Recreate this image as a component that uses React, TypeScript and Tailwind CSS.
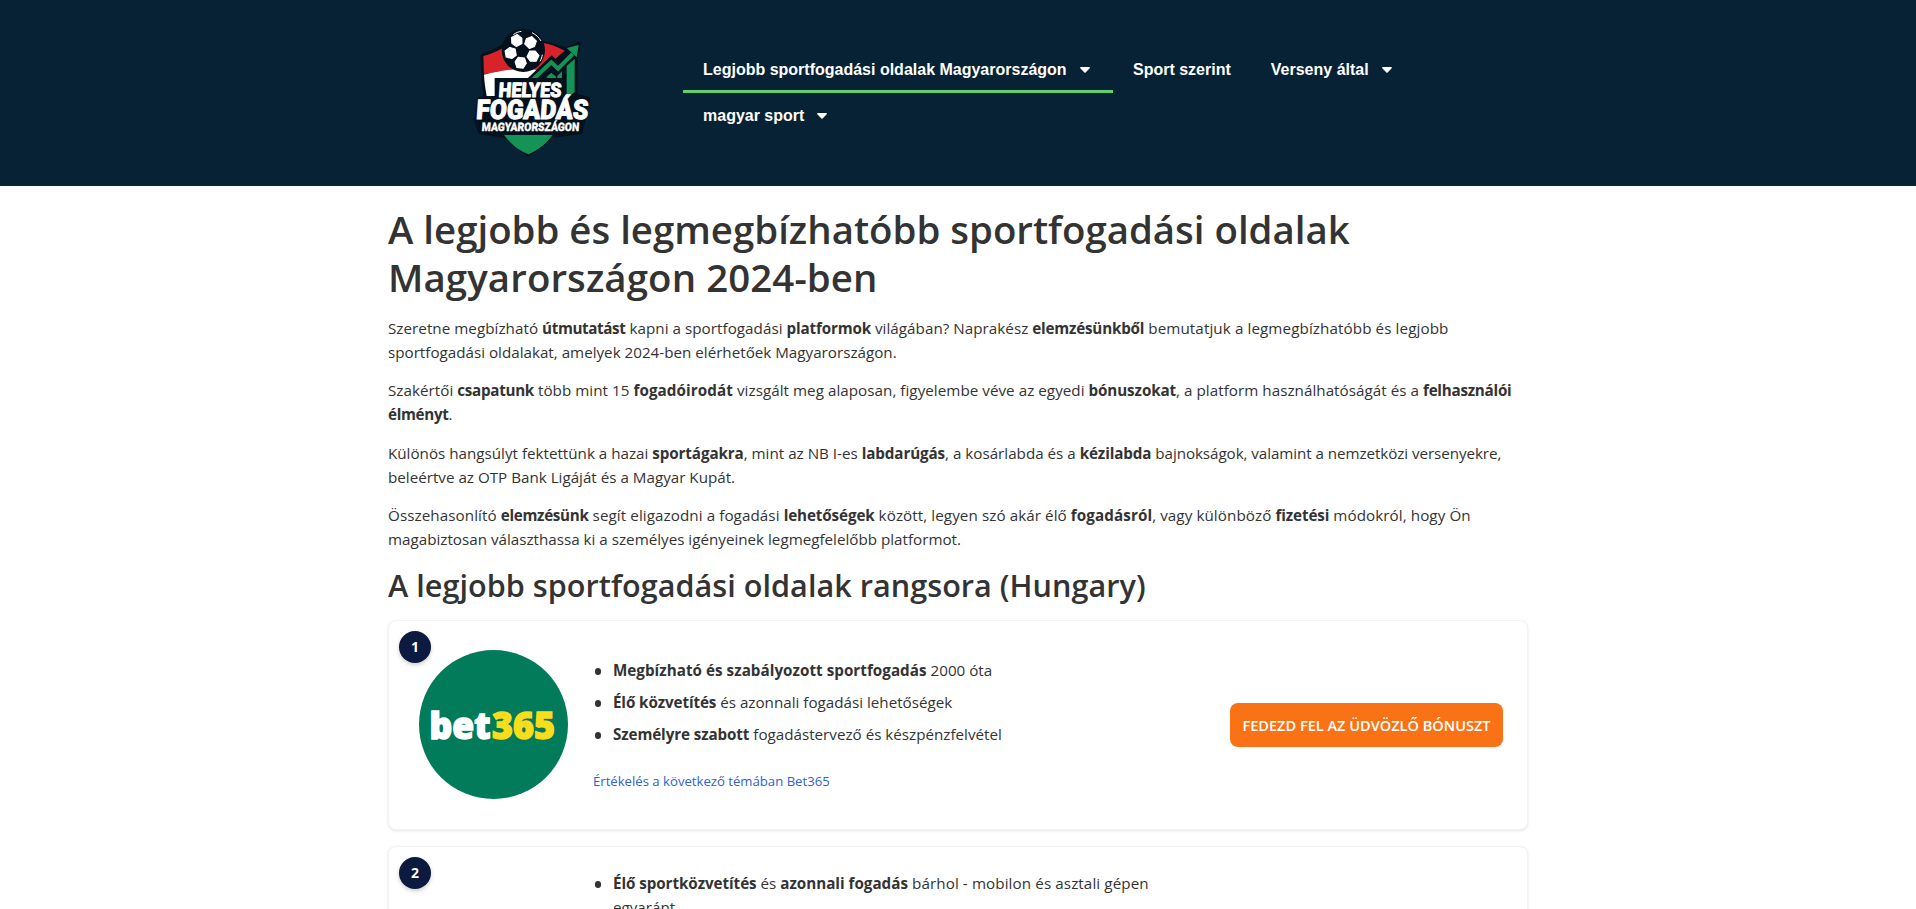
import { ReactNode } from "react";

const PANELS = ["rotate(-28)", "rotate(44)", "rotate(116)", "rotate(188)", "rotate(260)"];

function Logo() {
  return (
    <svg viewBox="0 0 450 450" className="h-[150px] w-[150px]" aria-label="Helyes Fogadás Magyarországon">
      <g stroke="#03111d" strokeWidth="16" strokeLinejoin="round" fill="#03111d">
        <path d="M70 108 C100 98 125 85 145 70 H245 C270 75 295 85 318 90 L355 73 L345 110 V228 L383 238 L360 335 L277 345 L205 402 L132 345 L62 335 L50 300 L60 238 H80 C74 200 70 150 70 108Z" />
      </g>
      <path d="M70 108 C100 99 128 88 150 68 H245 C268 70 292 80 314 92 L276 125 L240 156 C185 140 130 150 72 163Z" fill="#d8232a" />
      <path d="M72 164 C125 150 170 143 232 150 L212 174 H108 V228 H80 C76 205 73 185 72 164Z" fill="#fff" />
      <path d="M212 184 L275 124 L294 143 L346 94" fill="none" stroke="#03111d" strokeWidth="26" />
      <path d="M217 180 L274 127 L294 146 L338 102" fill="none" stroke="#159255" strokeWidth="12" />
      <path d="M356 75 L350 112 L320 84Z" fill="#159255" />
      <path d="M320 138 L344 116 V216 L334 224 H320Z M260 170 L274 158 L288 170 V180 H260Z M292 168 L306 154 V180 H292Z" fill="#159255" />
      <path d="M132 345 H278 C260 370 235 390 205 403 C173 390 150 370 132 345Z" fill="#159255" />
      <circle cx="190" cy="91" r="65" fill="#03111d" />
      <g transform="translate(187 93) scale(1.06)" fill="#fff" stroke="#fff" strokeWidth="3" strokeLinejoin="round">
        {PANELS.map((r) => (
          <path key={r} transform={r} d="M-9 -19 H9 L16 -33 L9 -48 H-9 L-16 -33Z" />
        ))}
      </g>
      <path d="M160 44 C168 38 176 35 184 34 M216 38 C228 44 237 52 243 63 M240 124 C244 117 246 111 247 104" fill="none" stroke="#fff" strokeWidth="3" />
      <path d="M104 174 H312 V232 H104Z" fill="#03111d" />
      <g fill="#fff" stroke="#fff" strokeLinejoin="round" className="font-['Roboto',sans-serif] font-black">
        <text x="131" y="230" fontSize="60" strokeWidth="2.5" textLength="188" lengthAdjust="spacingAndGlyphs" transform="skewX(-4)">HELYES</text>
        <text x="68" y="298" fontSize="81" strokeWidth="3" textLength="336" lengthAdjust="spacingAndGlyphs" transform="skewX(-4)">FOGADÁS</text>
        <text x="88" y="333" fontSize="35" strokeWidth="1" textLength="292" lengthAdjust="spacingAndGlyphs" transform="skewX(-4)">MAGYARORSZÁGON</text>
      </g>
    </svg>
  );
}

function Bet365() {
  return (
    <svg viewBox="0 0 149 149" className="h-[149px] w-[149px]" aria-label="bet365">
      <circle cx="74.5" cy="74.5" r="74.5" fill="#027b5b" />
      <g className="font-['Noto_Sans',sans-serif] font-black" fontSize="36.5">
        <text x="10.5" y="89" fill="#fff" stroke="#fff" strokeWidth="1.4" textLength="61" lengthAdjust="spacingAndGlyphs">bet</text>
        <text x="73" y="89" fill="#f9dc1c" stroke="#f9dc1c" strokeWidth="1.4" textLength="63" lengthAdjust="spacingAndGlyphs">365</text>
      </g>
    </svg>
  );
}

function Caret() {
  return (
    <svg viewBox="0 0 10 6" className="mr-[3.4px] ml-[13px] h-1.5 w-2.5" fill="#fff">
      <path d="M.8 0h8.4c.7 0 1 .8.5 1.2L5.6 5.4a.9.9 0 0 1-1.2 0L.3 1.2C-.2.8.1 0 .8 0Z" />
    </svg>
  );
}

function NavItem({ label, caret, active }: { label: string; caret?: boolean; active?: boolean }) {
  return (
    <a className={"flex h-[46px] items-center border-b-[3px] px-5 pt-[3px] whitespace-nowrap " + (active ? "border-[#61ce70]" : "border-transparent")}>
      <span>{label}</span>
      {caret && <Caret />}
    </a>
  );
}

function L({ children, c = "" }: { children: ReactNode; c?: string }) {
  return <span className={"block w-max whitespace-nowrap " + c}>{children}</span>;
}

function B({ children, c = "tracking-[-0.1px]" }: { children: ReactNode; c?: string }) {
  return <strong className={"font-bold " + c}>{children}</strong>;
}

function Item({ children }: { children: ReactNode }) {
  return (
    <li className="flex">
      <span className="mt-[9.7px] mr-3 ml-[1.6px] h-[6.4px] w-[6.4px] shrink-0 rounded-full bg-[#333]" />
      <div>{children}</div>
    </li>
  );
}

function Card({ rank, logo, children, action }: { rank: number; logo?: ReactNode; children: ReactNode; action?: ReactNode }) {
  return (
    <article className="relative flex h-[210px] items-center rounded-lg border border-[#f3f3f3] bg-white pr-6 pl-[29.7px] shadow-[0_1px_3px_rgba(0,0,0,0.1)]">
      <span className="absolute top-2.5 left-2.5 flex h-8 w-8 items-center justify-center rounded-full bg-[#0b1a3e] text-[14px] font-bold text-white shadow-[0_2px_4px_rgba(0,0,0,0.2)]">{rank}</span>
      <div className="w-[149px] shrink-0">{logo}</div>
      <div className="ml-[25.3px] w-[570px] shrink-0 pt-0.5">{children}</div>
      <div className="ml-auto">{action}</div>
    </article>
  );
}

export default function App() {
  return (
    <div className="h-[909px] overflow-hidden bg-white font-['Open_Sans','Noto_Sans',sans-serif] text-[15.2px] leading-6 text-[#333]">
      <header className="flex h-[186px] bg-[#072234] pl-[460px]">
        <div className="pt-5"><Logo /></div>
        <nav className="ml-[73px] flex w-[760px] flex-wrap content-start pt-[47px] font-['Liberation_Sans',Arial,sans-serif] text-base leading-5 font-bold text-white">
          <NavItem label="Legjobb sportfogadási oldalak Magyarországon" caret active />
          <NavItem label="Sport szerint" />
          <NavItem label="Verseny által" caret />
          <NavItem label="magyar sport" caret />
        </nav>
      </header>

      <main className="mx-auto w-[1140px] pt-[18.6px]">
        <h1 className="mb-[15.4px] text-[38.4px] leading-[48px] font-semibold">
          <L>A legjobb és legmegbízhatóbb sportfogadási oldalak</L>
          <L c="tracking-[0.1px]">Magyarországon 2024-ben</L>
        </h1>
        <div className="flex flex-col gap-[14.4px]">
          <p>
            <L c="tracking-[0.04px]">Szeretne megbízható <B c="tracking-[-0.37px]">útmutatást</B> kapni a sportfogadási <B c="tracking-[-0.15px]">platformok</B> világában? Naprakész <B c="tracking-[-0.2px]">elemzésünkből</B><span className="tracking-[0.1px]"> bemutatjuk a legmegbízhatóbb és legjobb</span></L>
            <L>sportfogadási oldalakat, amelyek 2024-ben elérhetőek Magyarországon.</L>
          </p>
          <p>
            <L c="tracking-[0.04px]">Szakértői <B c="tracking-[-0.3px]">csapatunk</B> több mint 15 <B c="tracking-[0.1px]">fogadóirodát</B> vizsgált meg alaposan, figyelembe véve az egyedi <B>bónuszokat</B>, a platform használhatóságát és a <B c="tracking-[-0.25px]">felhasználói</B></L>
            <L><B c="tracking-[-0.3px]">élményt</B>.</L>
          </p>
          <p>
            <L>Különös hangsúlyt fektettünk a hazai <B>sportágakra</B>, mint az NB I-es <B>labdarúgás</B>, a kosárlabda és a <B>kézilabda</B><span className="tracking-[-0.07px]"> bajnokságok, valamint a nemzetközi versenyekre,</span></L>
            <L>beleértve az OTP Bank Ligáját és a Magyar Kupát.</L>
          </p>
          <p>
            <L c="tracking-[0.08px]">Összehasonlító <B c="tracking-[-0.3px]">elemzésünk</B> segít eligazodni a fogadási <B>lehetőségek</B> között, legyen szó akár élő <B c="tracking-[0.1px]">fogadásról</B>, vagy különböző <B>fizetési</B> módokról, hogy Ön</L>
            <L>magabiztosan választhassa ki a személyes igényeinek legmegfelelőbb platformot.</L>
          </p>
        </div>
        <h2 className="mt-[14.4px] mb-4 text-[30.6px] leading-[38.4px] font-semibold">
          <L c="tracking-[0.03px]">A legjobb sportfogadási oldalak rangsora (Hungary)</L>
        </h2>

        <div className="flex flex-col gap-4">
          <Card
            rank={1}
            logo={<Bet365 />}
            action={<a className="flex h-11 w-[273px] items-center justify-center rounded-lg bg-[#f97316] text-[14.55px] font-semibold whitespace-nowrap text-white">FEDEZD FEL AZ ÜDVÖZLŐ BÓNUSZT</a>}
          >
            <ul className="flex flex-col gap-2">
              <Item><L><B c="tracking-[0.04px]">Megbízható és szabályozott sportfogadás</B> 2000 óta</L></Item>
              <Item><L><B>Élő közvetítés</B> és azonnali fogadási lehetőségek</L></Item>
              <Item><L><B>Személyre szabott</B> fogadástervező és készpénzfelvétel</L></Item>
            </ul>
            <a className="mt-[23px] block text-[13.15px] text-[#2f62d0]"><L>Értékelés a következő témában Bet365</L></a>
          </Card>
          <Card rank={2}>
            <ul className="flex h-[161px] flex-col gap-2">
              <Item>
                <L><B c="tracking-[-0.06px]">Élő sportközvetítés</B> és <B c="tracking-normal">azonnali fogadás</B><span className="tracking-[0.1px]"> bárhol - mobilon és asztali gépen</span></L>
                <L>egyaránt</L>
              </Item>
            </ul>
          </Card>
        </div>
      </main>
    </div>
  );
}
